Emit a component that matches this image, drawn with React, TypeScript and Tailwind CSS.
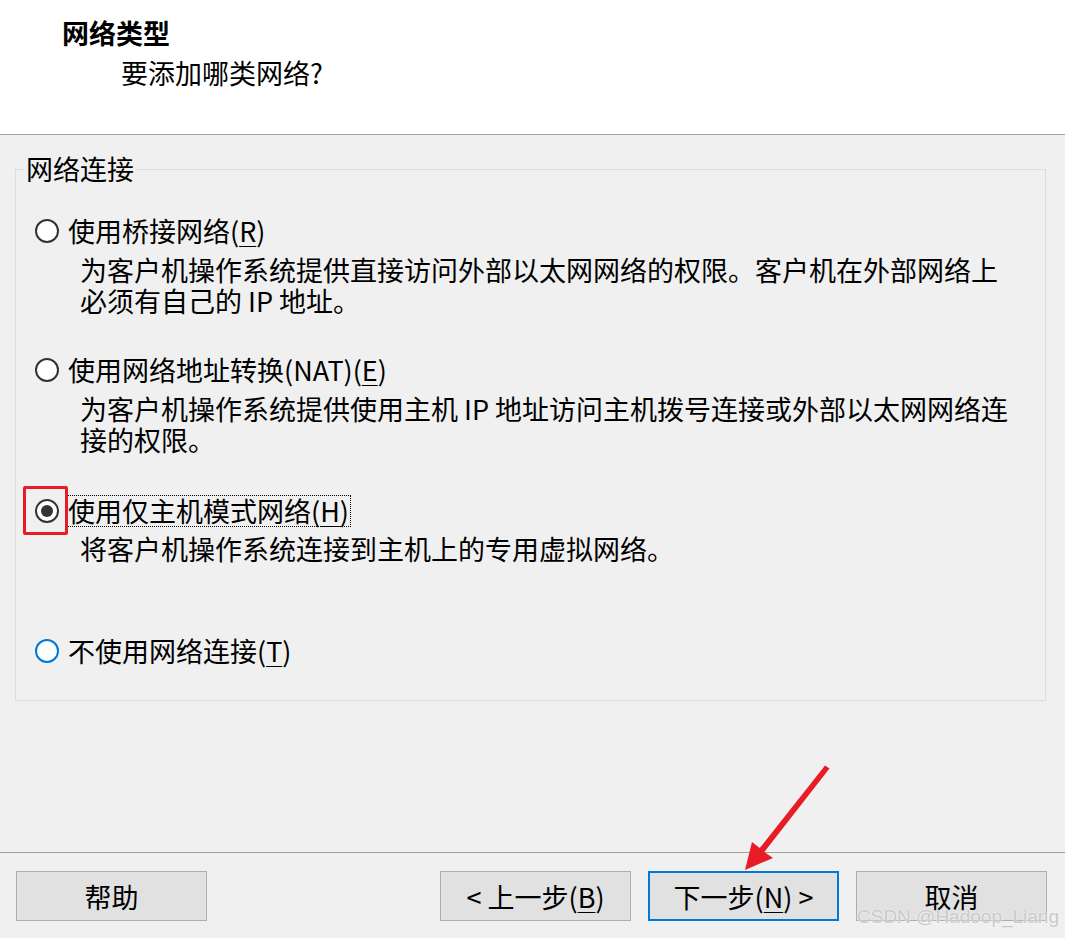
import React from "react";

type Opt = {
  label: string;
  key: string;
  desc: string[];
  checked?: boolean;
  hover?: boolean;
  focus?: boolean;
  gap: string;
  descGap: string;
};

const options: Opt[] = [
  {
    label: "使用桥接网络(",
    key: "R",
    desc: [
      "为客户机操作系统提供直接访问外部以太网网络的权限。客户机在外部网络上",
      "必须有自己的 IP 地址。",
    ],
    gap: "mt-[31px]",
    descGap: "mt-[7px]",
  },
  {
    label: "使用网络地址转换(NAT)(",
    key: "E",
    desc: [
      "为客户机操作系统提供使用主机 IP 地址访问主机拨号连接或外部以太网网络连",
      "接的权限。",
    ],
    gap: "mt-[38px]",
    descGap: "mt-[7px]",
  },
  {
    label: "使用仅主机模式网络(",
    key: "H",
    desc: ["将客户机操作系统连接到主机上的专用虚拟网络。"],
    checked: true,
    focus: true,
    gap: "mt-[40px]",
    descGap: "mt-[6px]",
  },
  {
    label: "不使用网络连接(",
    key: "T",
    desc: [],
    hover: true,
    gap: "mt-[71px]",
    descGap: "mt-0",
  },
];

function Radio({ checked, hover }: { checked?: boolean; hover?: boolean }) {
  return (
    <span
      className={
        "flex h-[24px] w-[24px] shrink-0 items-center justify-center rounded-full border-2 bg-white " +
        (hover ? "border-[#0078d7]" : "border-[#333333]")
      }
    >
      {checked && <span className="h-[12px] w-[12px] rounded-full bg-[#333333]" />}
    </span>
  );
}

function Button({ children, primary }: { children: React.ReactNode; primary?: boolean }) {
  return (
    <button
      className={
        "h-[50px] w-[191px] bg-[#e1e1e1] text-[27px] leading-none text-black " +
        (primary ? "border-2 border-[#0078d7]" : "border border-[#adadad]")
      }
    >
      {children}
    </button>
  );
}

export default function App() {
  return (
    <div className="relative flex h-[938px] w-[1065px] flex-col overflow-hidden bg-[#f0f0f0] font-['Microsoft_YaHei','Noto_Sans_CJK_SC',sans-serif] text-black">
      <div className="h-[135px] shrink-0 border-b border-[#a0a0a0] bg-white">
        <div className="pl-[62px] pt-[17px] text-[27px] font-bold leading-[32px]">网络类型</div>
        <div className="pl-[121px] pt-[8px] text-[27px] leading-[32px]">要添加哪类网络?</div>
      </div>

      <div className="flex-1">
        <fieldset className="ml-[15px] mt-[19px] w-[1031px] border border-[#dcdcdc] pb-[33px]">
          <legend className="ml-[8px] px-[2px] text-[27px] leading-[30px]">网络连接</legend>
          {options.map((o) => (
            <div key={o.key} className={o.gap}>
              <div className="relative flex items-center pl-[19px]">
                <Radio checked={o.checked} hover={o.hover} />
                {o.checked && (
                  <span className="absolute left-[7px] top-[-9px] h-[49px] w-[45px] rounded-[2px] border-[3px] border-[#e81c24]" />
                )}
                <span
                  className={
                    "ml-[7px] border px-[1px] text-[27px] leading-[30px] " +
                    (o.focus ? "border-dotted border-black" : "border-transparent")
                  }
                >
                  {o.label}
                  <span className="underline decoration-1 underline-offset-[4px]">{o.key}</span>)
                </span>
              </div>
              {o.desc.length > 0 && (
                <div className={"pl-[64px] text-[27px] leading-[31px] " + o.descGap}>
                  {o.desc.map((d) => (
                    <div key={d} className="whitespace-nowrap">
                      {d}
                    </div>
                  ))}
                </div>
              )}
            </div>
          ))}
        </fieldset>
      </div>

      <div className="flex h-[86px] shrink-0 items-start border-t border-[#a0a0a0] px-[16px] pt-[18px]">
        <Button>帮助</Button>
        <div className="ml-auto flex gap-[17px] pr-[2px]">
          <Button>
            &lt; 上一步(<span className="underline decoration-1 underline-offset-[4px]">B</span>)
          </Button>
          <Button primary>
            下一步(<span className="underline decoration-1 underline-offset-[4px]">N</span>) &gt;
          </Button>
          <Button>取消</Button>
        </div>
      </div>

      <svg className="pointer-events-none absolute left-0 top-0" width="1065" height="938">
        <polygon
          points="825,765.5 829.5,768.5 764.3,851.9 773,858 745,870 752,842 759.7,848.1"
          fill="#e81c24"
          strokeLinejoin="round"
        />
      </svg>

      <div className="pointer-events-none absolute right-[6px] top-[904px] font-['Liberation_Sans',sans-serif] text-[19px] leading-[26px] text-[#c9c9c9] [text-shadow:0_0_2px_#ffffff]">
        CSDN @Hadoop_Liang
      </div>
    </div>
  );
}
